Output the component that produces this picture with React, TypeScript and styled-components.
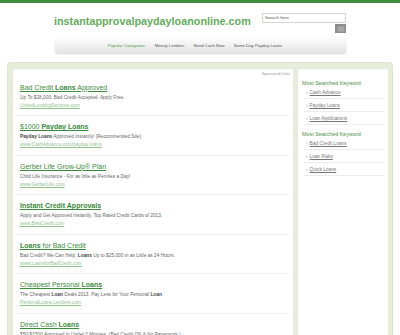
import styled, { createGlobalStyle } from "styled-components";

const Global = createGlobalStyle`
  html, body { margin: 0; padding: 0; background: #fff; overflow: hidden; }
  body { font-family: "Liberation Sans", Arial, sans-serif; }
`;

const TopBar = styled.div`
  height: 3px;
  background: #3f8c3f;
`;

const Header = styled.div`
  width: 292px;
  margin: 0 auto;
  padding-top: 10px;
  display: flex;
  justify-content: space-between;
  align-items: flex-start;
`;

const Domain = styled.div`
  font-size: 10.8px;
  line-height: 16px;
  font-weight: bold;
  color: #63ad5c;
`;

const Search = styled.div`
  display: flex;
  flex-direction: column;
  align-items: flex-end;
  gap: 1px;
`;

const SearchInput = styled.div`
  width: 80px;
  height: 8px;
  border: 1px solid #d4d4d4;
  padding-left: 2px;
  font-size: 4.4px;
  line-height: 7px;
  color: #555;
`;

const SearchButton = styled.div`
  width: 11px;
  height: 9px;
  background: #8c8c8c;
  display: flex;
  align-items: center;
  justify-content: center;
  &::after {
    content: "";
    width: 6px;
    height: 4px;
    border-radius: 1px;
    background: #a9a9a9;
    border: 1px solid #9b9b9b;
  }
`;

const Nav = styled.nav`
  width: 291px;
  height: 15px;
  margin: 5px auto 0;
  border-radius: 3px;
  background: linear-gradient(#fdfdfd, #e4e4e4);
  box-shadow: 0 1px 2px rgba(0, 0, 0, 0.18);
  display: flex;
  align-items: center;
  justify-content: center;
  gap: 9px;
  padding-right: 10px;
  box-sizing: border-box;
`;

const NavItem = styled.span<{ $lead?: boolean }>`
  font-size: 4.3px;
  color: ${(p) => (p.$lead ? "#4a9a3c" : "#555")};
`;

const Frame = styled.div`
  width: 386px;
  box-sizing: border-box;
  margin: 9px auto 0;
  background: #e6eedb;
  border: 1px solid #dae6cb;
  border-radius: 4px;
  padding: 6px 4px 0 5px;
  display: grid;
  grid-template-columns: 280px 90px;
  gap: 5px;
  height: 300px;
`;

const Panel = styled.div`
  background: #fff;
  border-radius: 3px 3px 0 0;
`;

const Sponsored = styled.div`
  text-align: right;
  font-size: 3.8px;
  line-height: 6px;
  color: #999;
  padding: 1.5px 3px 0 0;
`;

const Ad = styled.div`
  margin: 0 4px 0 2px;
  padding: 5px 0 5.5px 5px;
  border-bottom: 1px solid #eeeeee;
  & + & {
    padding-top: 5px;
  }
`;

const AdTitle = styled.a`
  display: block;
  font-size: 7px;
  line-height: 11px;
  color: #3b8a3b;
  text-decoration: underline;
`;

const AdDesc = styled.div`
  font-size: 4.8px;
  line-height: 9px;
  color: #666;
  b { color: #444; }
`;

const AdUrl = styled.a`
  display: block;
  font-size: 4.8px;
  line-height: 8px;
  color: #92c38e;
  text-decoration: underline;
`;

const Side = styled(Panel)`
  padding: 11px 4px 0 4px;
`;

const SideHead = styled.div<{ $next?: boolean }>`
  font-size: 5.4px;
  line-height: 6px;
  color: #4f8f4a;
  margin-top: ${(p) => (p.$next ? 6 : 0)}px;
`;

const SideList = styled.ul`
  list-style: none;
  margin: 0;
  padding: 0;
`;

const SideItem = styled.li`
  height: 12px;
  border-bottom: 1px solid #ececec;
  margin-left: 2px;
  display: flex;
  align-items: center;
  gap: 2px;
  padding-left: 2px;
  font-size: 4.8px;
  color: #777;
  &::before {
    content: "›";
    color: #999;
  }
  span { text-decoration: underline; }
`;

const ads = [
  { t: <>Bad Credit <b>Loans</b> Approved</>, d: <>Up To $28,000. Bad Credit Accepted. Apply Free.</>, u: "UnitedLendingServices.com" },
  { t: <>$1000 <b>Payday Loans</b></>, d: <><b>Payday Loans</b> Approved Instantly! (Recommended Site)</>, u: "www.CashAdvance.com/payday-loans" },
  { t: <>Gerber Life Grow-Up® Plan</>, d: <>Child Life Insurance - For as little as Pennies a Day!</>, u: "www.GerberLife.com" },
  { t: <b>Instant Credit Approvals</b>, d: <>Apply and Get Approved Instantly. Top Rated Credit Cards of 2013.</>, u: "www.BestCredit.com" },
  { t: <><b>Loans</b> for Bad Credit</>, d: <>Bad Credit? We Can Help. <b>Loans</b> Up to $25,000 in as Little as 24 Hours.</>, u: "www.LoansforBadCredit.com" },
  { t: <>Cheapest Personal <b>Loans</b></>, d: <>The Cheapest <b>Loan</b> Deals 2013. Pay Less for Your Personal <b>Loan</b>.</>, u: "PersonalLoans.Lenders.com" },
  { t: <>Direct Cash <b>Loans</b></>, d: <>$50-$1500 Approved in Under 2 Minutes. (Bad Credit OK &amp; No Paperwork.)</>, u: "www.DirectCashLoans.com" },
];

const keywords = [
  ["Cash Advance", "Payday Loans", "Loan Applications"],
  ["Bad Credit Loans", "Loan Ratio", "Quick Loans"],
];

export default function App() {
  return (
    <>
      <Global />
      <TopBar />
      <Header>
        <Domain>instantapprovalpaydayloanonline.com</Domain>
        <Search>
          <SearchInput>Search here</SearchInput>
          <SearchButton />
        </Search>
      </Header>
      <Nav>
        <NavItem $lead>Popular Categories:</NavItem>
        <NavItem>Money Lenders</NavItem>
        <NavItem>Need Cash Now</NavItem>
        <NavItem>Same Day Payday Loans</NavItem>
      </Nav>
      <Frame>
        <Panel>
          <Sponsored>Sponsored Links</Sponsored>
          {ads.map((a, i) => (
            <Ad key={i}>
              <AdTitle>{a.t}</AdTitle>
              <AdDesc>{a.d}</AdDesc>
              <AdUrl>{a.u}</AdUrl>
            </Ad>
          ))}
        </Panel>
        <Side>
          {keywords.map((group, g) => (
            <div key={g}>
              <SideHead $next={g > 0}>Most Searched Keyword</SideHead>
              <SideList>
                {group.map((k) => (
                  <SideItem key={k}><span>{k}</span></SideItem>
                ))}
              </SideList>
            </div>
          ))}
        </Side>
      </Frame>
    </>
  );
}
